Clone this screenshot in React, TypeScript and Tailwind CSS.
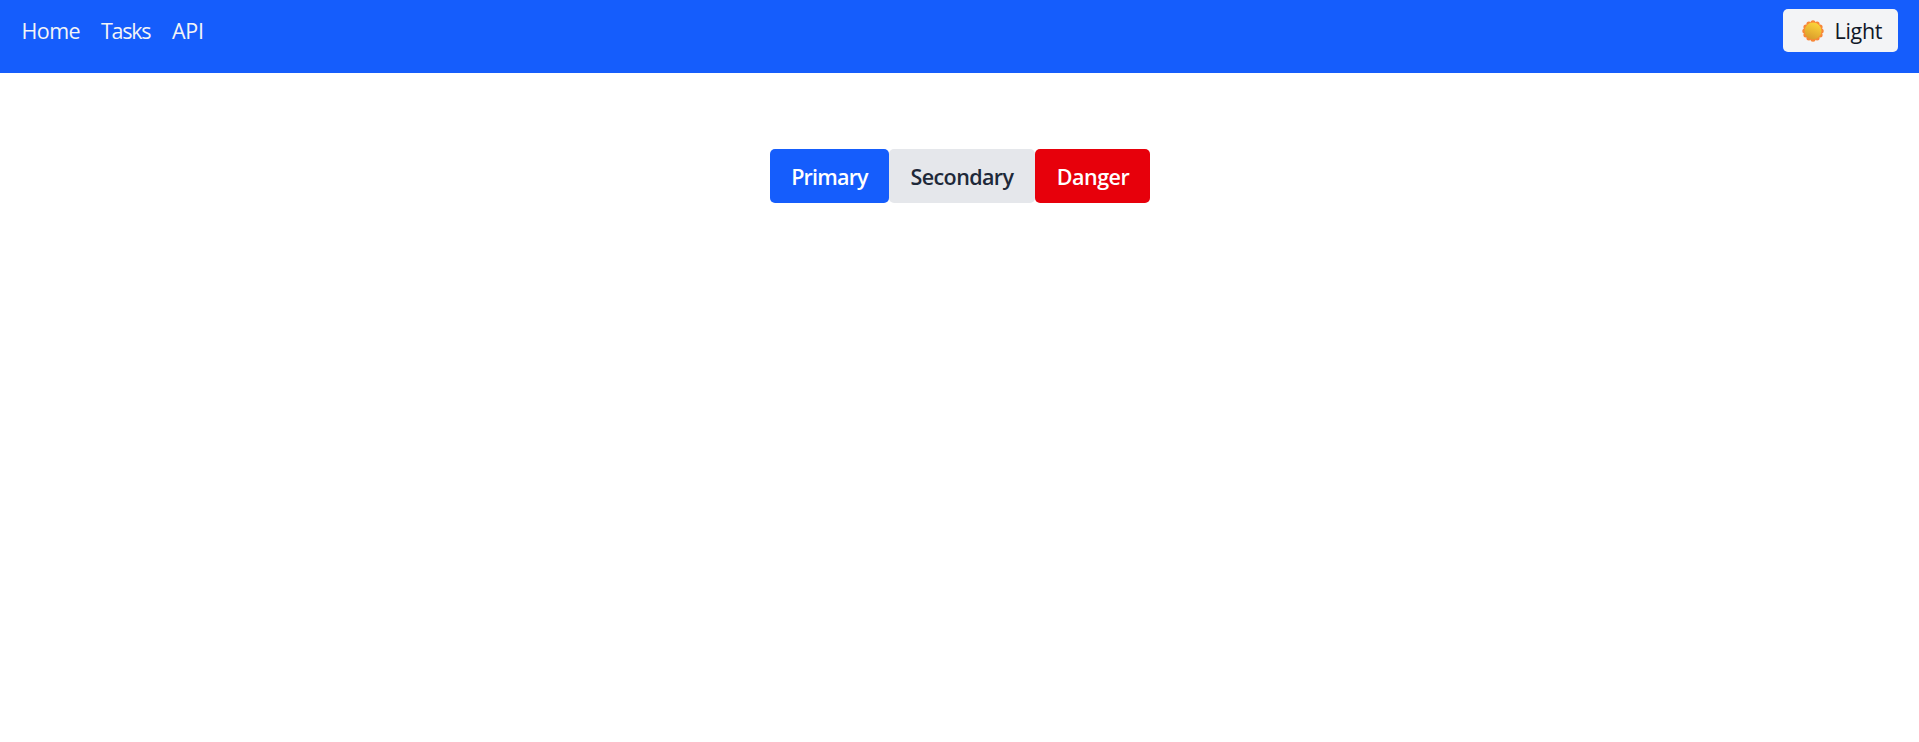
const links = [
  { label: "Home", style: "w-[79.5px] tracking-[-0.55px]" },
  { label: "Tasks", style: "w-[71px] tracking-[-1.3px]" },
  { label: "API", style: "tracking-[-0.3px]" },
];

const buttons = [
  { label: "Primary", style: "w-[119px] tracking-[-0.8px] bg-[#155dfc] text-white" },
  { label: "Secondary", style: "w-[146px] tracking-[-0.6px] bg-[#e5e7eb] text-[#1e2939]" },
  { label: "Danger", style: "w-[115px] pl-px tracking-[-0.5px] bg-[#e7000b] text-white" },
];

function SunIcon() {
  const petals = Array.from({ length: 12 }, (_, i) => (i * Math.PI) / 6);
  return (
    <svg viewBox="0 0 22 22" className="size-[22px]" aria-hidden="true">
      <defs>
        <linearGradient id="disc" x1="0.7" y1="0" x2="0.3" y2="1">
          <stop offset="0" stopColor="#fdd63b" />
          <stop offset="1" stopColor="#d99a2b" />
        </linearGradient>
      </defs>
      <g fill="#f88737">
        {petals.map((a) => (
          <circle key={a} cx={11 + 8.2 * Math.sin(a)} cy={11 - 8.2 * Math.cos(a)} r="2.5" />
        ))}
      </g>
      <circle cx="11" cy="11" r="8.5" fill="url(#disc)" />
    </svg>
  );
}

export default function App() {
  return (
    <div className="min-h-screen bg-white font-['Open_Sans','Noto_Sans',sans-serif] text-[21.5px] leading-[32px]">
      <nav className="flex h-[73px] items-start justify-between bg-[#155dfc] pr-[21px] pl-[21.5px]">
        <div className="flex pt-[15px] text-[#f3f4f6]">
          {links.map((l) => (
            <a key={l.label} href="#" className={l.style}>
              {l.label}
            </a>
          ))}
        </div>
        <button className="mt-[9px] flex h-[43px] w-[115px] items-center rounded-[5px] bg-[#f3f4f6] pl-[19px] text-[#101828]">
          <SunIcon />
          <span className="ml-[10.5px] tracking-[-0.3px]">Light</span>
        </button>
      </nav>
      <main className="flex justify-center pt-[76px] pl-px">
        {buttons.map((b) => (
          <button
            key={b.label}
            className={`h-[54px] rounded-[5px] pt-px font-[560] ${b.style}`}
          >
            {b.label}
          </button>
        ))}
      </main>
    </div>
  );
}
